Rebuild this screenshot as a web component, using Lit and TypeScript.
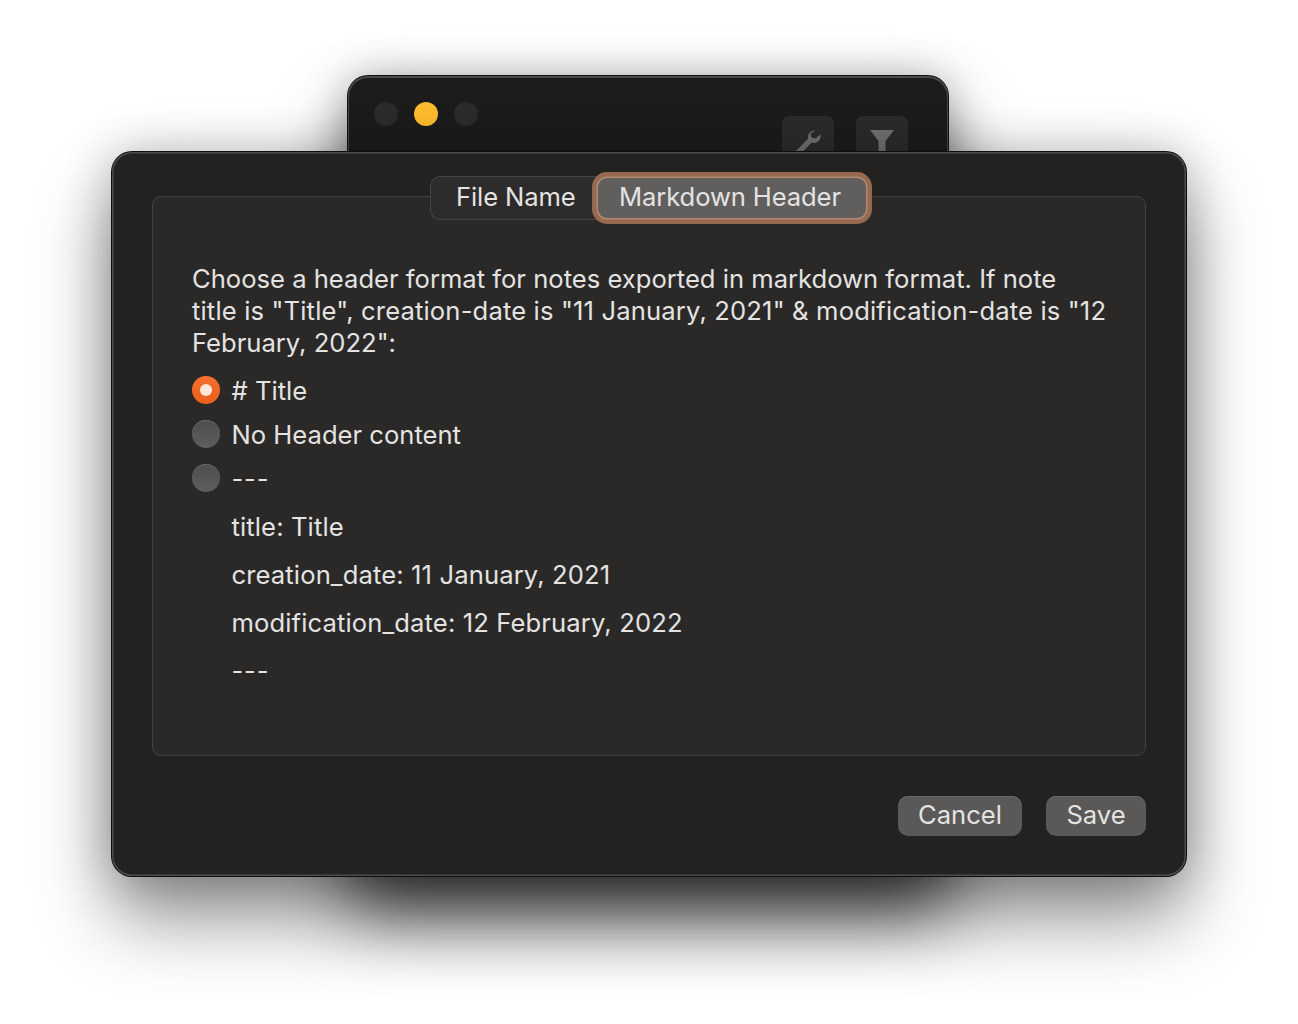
import { LitElement, html, css } from "lit";
import { customElement } from "lit/decorators.js";

@customElement("app-root")
export class AppRoot extends LitElement {
  static styles = css`
    :host {
      display: block;
      position: relative;
      width: 1298px;
      height: 1024px;
      overflow: hidden;
      background: #fff;
      font-family: Inter, "Liberation Sans", sans-serif;
      color: #e4e3e2;
      font-size: 25.6px;
      letter-spacing: 0;
    }
    .back {
      position: absolute;
      left: 348px;
      top: 76px;
      width: 600px;
      height: 794px;
      box-sizing: border-box;
      background: #1c1c1c;
      border-radius: 20px;
      box-shadow: 0 0 0 1px #111, inset 0 1px 0 1px #4a4a4a, 0 44px 70px rgba(0, 0, 0, 0.62), 0 0 44px rgba(0, 0, 0, 0.28);
      padding: 26px 26px 0;
      display: flex;
      justify-content: space-between;
    }
    .lights {
      display: flex;
      gap: 16px;
    }
    .light {
      width: 24px;
      height: 24px;
      border-radius: 50%;
      background: #2c2c2c;
    }
    .light.yellow {
      background: #febc2e;
    }
    .tools {
      display: flex;
      gap: 22px;
      padding: 14px 14px 0 0;
    }
    .tool {
      width: 52px;
      height: 52px;
      box-sizing: border-box;
      border-radius: 7px;
      background: #2c2c2a;
      display: flex;
      justify-content: center;
      padding-top: 12px;
    }
    .tool svg {
      width: 28px;
      height: 28px;
    }
    .sheet {
      position: absolute;
      left: 112px;
      top: 152px;
      width: 1074px;
      height: 724px;
      box-sizing: border-box;
      background: #232220;
      border-radius: 20px;
      box-shadow: 0 0 0 1px #0e0e0e, inset 0 0 0 1.5px #4c4c4b, 0 42px 76px rgba(0, 0, 0, 0.44), 0 0 50px rgba(0, 0, 0, 0.24);
      padding: 44px 40px 40px;
      display: flex;
      flex-direction: column;
      gap: 40px;
    }
    .box {
      position: relative;
      height: 560px;
      box-sizing: border-box;
      background: #2a2928;
      border: 1.5px solid #434241;
      border-radius: 9px;
      padding: 66px 38.5px 0;
    }
    .tabs {
      position: absolute;
      left: 277px;
      top: -21px;
      display: flex;
      height: 44px;
    }
    .tab {
      box-sizing: border-box;
      height: 44px;
      display: flex;
      align-items: center;
      white-space: nowrap;
      padding-bottom: 4px;
      letter-spacing: -0.12px;
    }
    .tab.plain {
      width: 200px;
      padding-left: 25px;
      background: #2d2b2b;
      border: 1.5px solid #464544;
      border-radius: 10px 0 0 10px;
      border-right: none;
    }
    .tab.active {
      position: relative;
      margin-left: -32px;
      margin-top: 2px;
      width: 268px;
      height: 40px;
      padding-right: 4px;
      justify-content: center;
      background: #605f5e;
      border-radius: 9px;
      box-shadow: 0 0 0 1.5px #b08a70, 0 0 0 6px #966a50;
    }
    p {
      margin: 0 0 17px 0.5px;
      line-height: 32px;
      white-space: nowrap;
    }
    .wide {
      letter-spacing: 0.15px;
    }
    .row {
      display: flex;
      align-items: center;
      gap: 12px;
      height: 28px;
      margin-bottom: 16px;
      white-space: nowrap;
    }
    .radio {
      flex: none;
      width: 28px;
      height: 28px;
      border-radius: 50%;
      background: linear-gradient(#4f4e4d, #5f5e5d);
      box-shadow: inset 0 1px 0 #666;
      display: flex;
      align-items: center;
      justify-content: center;
    }
    .radio.on {
      background: linear-gradient(#f4702c, #e85f1c);
      box-shadow: none;
    }
    .radio.on::after {
      content: "";
      width: 12px;
      height: 12px;
      border-radius: 50%;
      background: #ffe9df;
    }
    .lines {
      margin: -5px 0 0 40px;
      letter-spacing: 0.12px;
    }
    .lines div {
      height: 48px;
      line-height: 48px;
      white-space: nowrap;
    }
    .row .dash,
    .lines .dash {
      letter-spacing: 0.8px;
    }
    .actions {
      display: flex;
      justify-content: flex-end;
      gap: 24px;
    }
    button {
      font: inherit;
      color: inherit;
      height: 40px;
      padding: 0 0 3px;
      border: none;
      border-radius: 10px;
      background: #5a5957;
      box-shadow: inset 0 1px 0 #696866;
    }
    .cancel {
      width: 124px;
    }
    .save {
      width: 100px;
    }
  `;

  render() {
    return html`
      <div class="back">
        <div class="lights">
          <div class="light"></div>
          <div class="light yellow"></div>
          <div class="light"></div>
        </div>
        <div class="tools">
          <div class="tool">
            <svg viewBox="0 0 28 28">
              <path
                fill="#727272"
                d="M20.6 2.6a6.6 6.6 0 0 0-6.5 8.2L2.2 22.7a2.6 2.6 0 0 0 3.6 3.7l12-11.9a6.6 6.6 0 0 0 8.4-8.3l-4.4 4.3-4.2-1-1-4 4.2-2.6a7 7 0 0 0-.2-.3z"
              />
            </svg>
          </div>
          <div class="tool">
            <svg viewBox="0 0 28 28"><path fill="#727272" d="M2 2h24L17.500 13v15h-7V13z" /></svg>
          </div>
        </div>
      </div>
      <div class="sheet">
        <div class="box">
          <div class="tabs">
            <div class="tab plain">File Name</div>
            <div class="tab active">Markdown Header</div>
          </div>
          <p>
            Choose a header format for notes exported in markdown format. If note<br /><span class="wide"
              >title is "Title", creation-date is "11 January, 2021" &amp; modification-date is "12</span
            ><br />February, 2022":
          </p>
          <div class="row"><span class="radio on"></span># Title</div>
          <div class="row"><span class="radio"></span>No Header content</div>
          <div class="row"><span class="radio"></span><span class="dash">---</span></div>
          <div class="lines">
            <div>title: Title</div>
            <div>creation_date: 11 January, 2021</div>
            <div>modification_date: 12 February, 2022</div>
            <div class="dash">---</div>
          </div>
        </div>
        <div class="actions">
          <button class="cancel">Cancel</button>
          <button class="save">Save</button>
        </div>
      </div>
    `;
  }
}
